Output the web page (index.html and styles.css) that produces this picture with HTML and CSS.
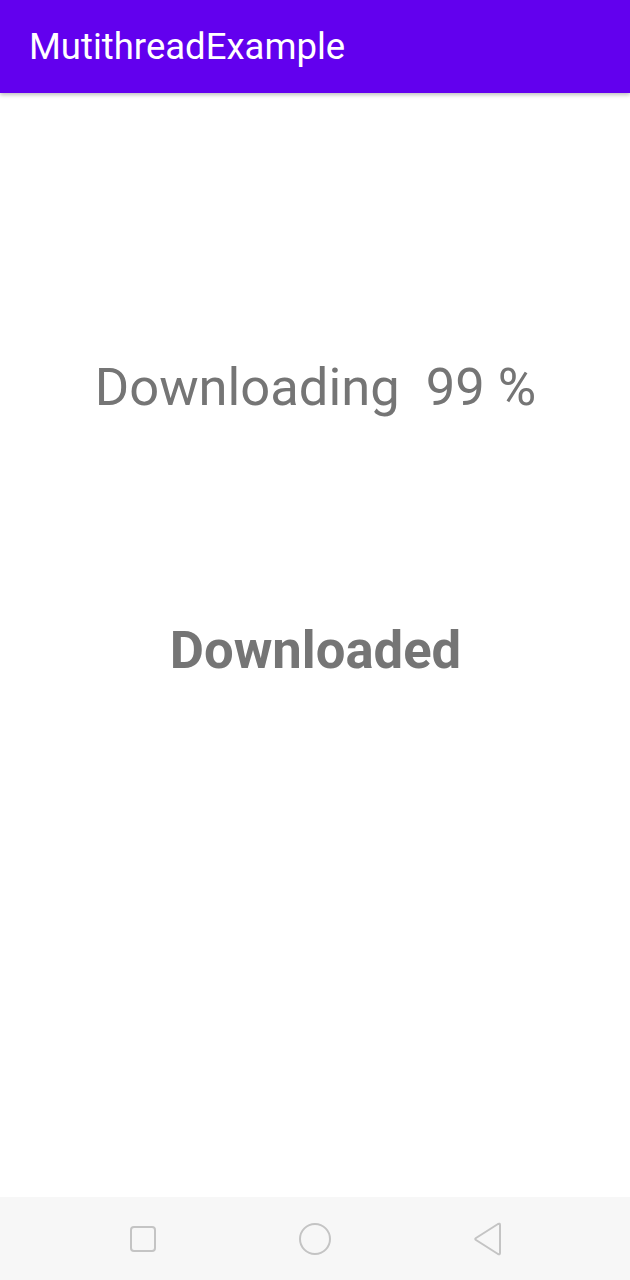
FILE: index.html
```html
<!DOCTYPE html>
<html>
<head>
<meta charset="utf-8">
<link rel="stylesheet" href="styles.css">
</head>
<body>
<div class="screen">
  <header class="appbar"><span class="title">MutithreadExample</span></header>
  <main class="content">
    <div class="progress">Downloading&nbsp; 99 %</div>
    <div class="status">Downloaded</div>
  </main>
  <nav class="navbar">
    <svg class="nav-icon" width="28" height="28" viewBox="0 0 28 28"><rect x="2" y="2" width="24" height="24" rx="3" fill="none" stroke="#c4c4c4" stroke-width="2"/></svg>
    <svg class="nav-icon" width="34" height="34" viewBox="0 0 34 34"><circle cx="17" cy="17" r="15" fill="none" stroke="#c4c4c4" stroke-width="2"/></svg>
    <svg class="nav-icon" width="30" height="36" viewBox="0 0 30 36"><path d="M26 3 L4 17 Q2.5 18 4 19 L26 33 Q28 34 28 32 L28 4 Q28 2 26 3 Z" fill="none" stroke="#c4c4c4" stroke-width="2" stroke-linejoin="round"/></svg>
  </nav>
</div>
</body>
</html>
```

FILE: styles.css
```css
html, body {
  margin: 0;
  padding: 0;
  background: #ffffff;
}
.screen {
  width: 630px;
  height: 1280px;
  display: flex;
  flex-direction: column;
  font-family: Roboto, "Noto Sans", sans-serif;
}
.appbar {
  height: 93px;
  background: #6200ee;
  display: flex;
  align-items: center;
  padding-left: 29px;
  box-shadow: 0 2px 4px rgba(0,0,0,0.25);
  position: relative;
  z-index: 1;
  flex: none;
}
.title {
  color: #ffffff;
  font-size: 36.5px;
  font-weight: 400;
}
.content {
  flex: 1;
  display: flex;
  flex-direction: column;
  align-items: center;
}
.progress {
  margin-top: 254px;
  font-size: 52.5px;
  color: #757575;
  line-height: 80px;
  padding-left: 1px;
}
.status {
  margin-top: 183px;
  font-size: 52.6px;
  font-weight: 700;
  color: #757575;
  line-height: 80px;
  padding-left: 1px;
}
.navbar {
  height: 83px;
  background: #f7f7f7;
  display: flex;
  align-items: center;
  justify-content: space-between;
  padding: 0 128px 0 129px;
  flex: none;
}
```
